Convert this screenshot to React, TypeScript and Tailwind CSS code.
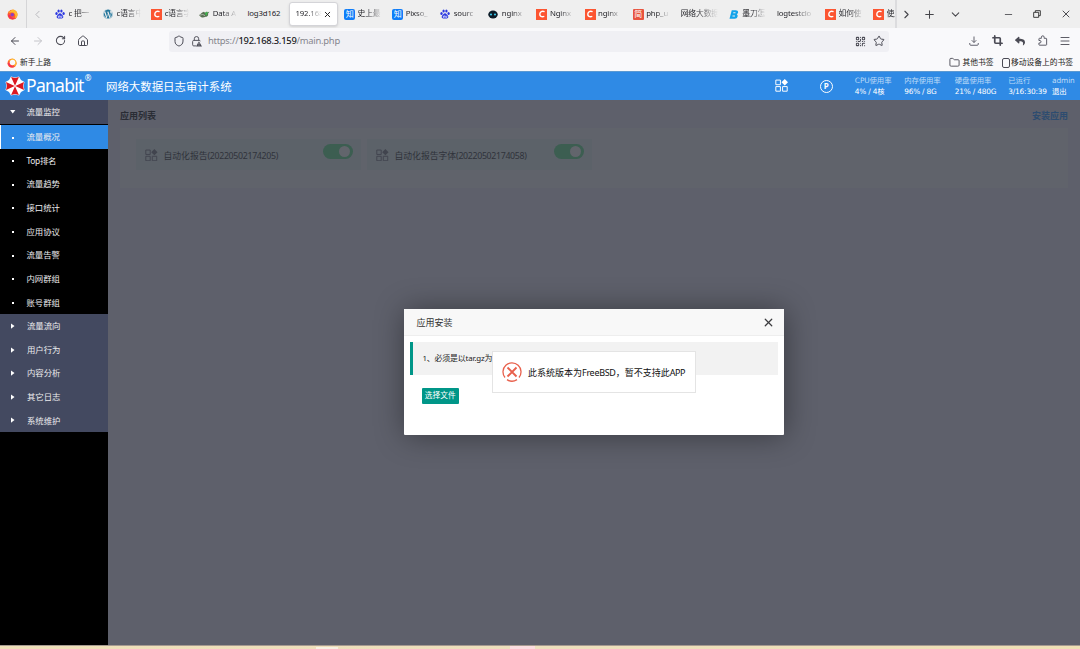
import type { ReactNode } from "react";
import clsx from "clsx";
import {
  ArrowLeft,
  ArrowRight,
  ChevronDown,
  ChevronLeft,
  ChevronRight,
  Crop,
  Folder,
  House,
  Menu,
  Minus,
  Plus,
  QrCode,
  RotateCw,
  Shield,
  Star,
  X,
} from "lucide-react";
import { FaReply, FaWordpress } from "react-icons/fa";

type IconKind =
  | "baidu"
  | "wordpress"
  | "csdn"
  | "data"
  | "zhihu"
  | "robot"
  | "jian"
  | "modao";

interface Tab {
  title: string;
  icon?: IconKind;
  active?: boolean;
}

const tabs: Tab[] = [
  { title: "c 把一", icon: "baidu" },
  { title: "c语言中", icon: "wordpress" },
  { title: "c语言字", icon: "csdn" },
  { title: "Data A", icon: "data" },
  { title: "log3d162" },
  { title: "192.168", active: true },
  { title: "史上最", icon: "zhihu" },
  { title: "Pixso_", icon: "zhihu" },
  { title: "sourc", icon: "baidu" },
  { title: "nginx", icon: "robot" },
  { title: "Nginx", icon: "csdn" },
  { title: "nginx", icon: "csdn" },
  { title: "php_u", icon: "jian" },
  { title: "网络大数据" },
  { title: "墨刀怎", icon: "modao" },
  { title: "logtestclo" },
  { title: "如何使", icon: "csdn" },
  { title: "使用", icon: "csdn" },
];

const menuItems = [
  "流量概况",
  "Top排名",
  "流量趋势",
  "接口统计",
  "应用协议",
  "流量告警",
  "内网群组",
  "账号群组",
];

const menuGroups = ["流量流向", "用户行为", "内容分析", "其它日志", "系统维护"];

const apps = [
  { name: "自动化报告", version: "(20220502174205)" },
  { name: "自动化报告字体", version: "(20220502174058)" },
];

const stats = [
  { label: "CPU使用率", value: "4% / 4核", width: "w-[49.3px]" },
  { label: "内存使用率", value: "96% / 8G", width: "w-[50.7px]" },
  { label: "硬盘使用率", value: "21% / 480G", width: "w-[53.5px]" },
  { label: "已运行", value: "3/16:30:39", width: "w-[43.7px]" },
  { label: "admin", value: "退出", width: "w-[28px]" },
];

function Square({ className, children }: { className: string; children: ReactNode }) {
  return (
    <span
      className={clsx(
        "flex size-[11px] shrink-0 items-center justify-center leading-none text-white",
        className
      )}
    >
      {children}
    </span>
  );
}

function TabIcon({ kind }: { kind: IconKind }) {
  switch (kind) {
    case "baidu":
      return (
        <svg viewBox="0 0 20 20" className="mr-[1px] size-[10px] shrink-0" fill="#2a36e0">
          <ellipse cx="3" cy="9" rx="2.3" ry="3" />
          <ellipse cx="7.2" cy="4" rx="2.3" ry="3.2" />
          <ellipse cx="12.8" cy="4" rx="2.3" ry="3.2" />
          <ellipse cx="17.2" cy="9" rx="2.3" ry="3" />
          <path d="M10 8.5c2.5 0 3.5 2.6 5.2 4.2 2.4 2.2 2 6.3-1.6 6.5-1.5.1-2.300-.4-3.600-.4s-2.200.5-3.700.4c-3.500-.2-3.900-4.300-1.500-6.500C6.500 11.100 7.500 8.500 10 8.500z" />
          <path d="M8.500 12.500v4.300H6.500v-2h2M11.300 13.500v3.300h2.300v-3.300" fill="none" stroke="#fff" strokeWidth="1.300" />
        </svg>
      );
    case "wordpress":
      return <FaWordpress className="mr-[1px] size-[10px] shrink-0 text-[#21759b]" />;
    case "csdn":
      return (
        <Square className="bg-[#fc5531]">
          <svg viewBox="0 0 10 10" className="size-[10px]" fill="none" stroke="#fff" strokeWidth="1.4">
            <path d="M7.600 2.700C5 1.600 3 2.600 2.800 5s1.900 3.300 4.500 2.300" />
          </svg>
        </Square>
      );
    case "data":
      return (
        <svg viewBox="0 0 20 12" className="h-[7px] w-[11px] shrink-0">
          <path d="M0 7c3-1 4-5 9-6l2 2 4-3-1 3 5-2-3 4c2 1 0 5-4 5-3 2-8 2-9 0z" fill="#587052" />
          <path d="M11 3l6-2-3 4 2 3-4-1z" fill="#3bbd4c" />
          <path d="M2 7l5-1 4 2" fill="none" stroke="#d7ded6" strokeWidth="1.200" />
        </svg>
      );
    case "zhihu":
      return <Square className="rounded-[2px] bg-[#0f7df8] text-[8px]">知</Square>;
    case "robot":
      return (
        <svg viewBox="0 0 20 18" className="mr-[1px] h-[9px] w-[10px] shrink-0">
          <ellipse cx="10" cy="9" rx="9.500" ry="8" fill="#0b1a26" />
          <circle cx="6" cy="9" r="2.200" fill="#39c3e6" />
          <circle cx="14" cy="9" r="2.200" fill="#39c3e6" />
        </svg>
      );
    case "jian":
      return <Square className="rounded-[1px] bg-[#e8533e] text-[8px]">简</Square>;
    case "modao":
      return (
        <svg viewBox="0 0 20 18" className="mr-[1px] h-[9px] w-[10px] shrink-0">
          <path
            d="M5.500 0.500h8c6 0 6 6.500 2 8 3.500 1.500 2 9-4 9H1z"
            fill="#12a3ea"
          />
          <path d="M8.500 5.500h4.500M7 12h5" stroke="#efefef" strokeWidth="2" />
        </svg>
      );
  }
}

function BrowserTab({ tab }: { tab: Tab }) {
  return (
    <div
      className={clsx(
        "flex w-[48.100px] shrink-0 items-center text-[7.800px] tracking-[-0.150px] text-[#25252a]",
        tab.active
          ? "my-[2px] ml-[0.500px] w-[47.600px] rounded-[3px] border border-[#d4d4d8] bg-white pl-[5px] pr-[5px] shadow-sm"
          : "pl-[6.500px] pr-[4px]"
      )}
    >
      {tab.icon && <TabIcon kind={tab.icon} />}
      <span
        className={clsx(
          "min-w-0 flex-1 whitespace-nowrap",
          tab.icon && "ml-[2.500px]",
          tab.title !== "log3d162" &&
            "[mask-image:linear-gradient(to_right,black_40%,transparent)]"
        )}
      >
        {tab.title}
      </span>
      {tab.active && <X className="ml-[1px] size-[9px] shrink-0 text-[#222]" strokeWidth={2.600} />}
    </div>
  );
}

function FirefoxLogo({ ring }: { ring?: boolean }) {
  return (
    <svg viewBox="0 0 20 20" className={clsx("shrink-0", ring ? "size-[10px]" : "size-[11px]")}>
      <circle cx="10" cy="10.500" r="9" fill="#ff5b2e" />
      <path d="M2 6C5 5 8 1 12 1c5 2 8 6 7 11-1 3-3 5-6 6 3-4 3-8-1-11C9 5 5 8 2 6z" fill="#ffb92e" />
      <path d="M1.500 10c1 8 10 11 15 6-5 2-9 0-11-5z" fill="#f02e5d" />
      {ring ? (
        <circle cx="11" cy="9" r="5.500" fill="#f9f9fb" />
      ) : (
        <circle cx="9.500" cy="10.500" r="3.200" fill="#8a3fc4" />
      )}
    </svg>
  );
}

function LockWarning() {
  return (
    <svg viewBox="0 0 20 20" className="size-[11px]" fill="none" stroke="#4b4b55" strokeWidth="1.700">
      <path d="M6 8V5a4 4 0 0 1 8 0v3" />
      <path d="M9 18H5a2 2 0 0 1-2-2v-6a2 2 0 0 1 2-2h10a2 2 0 0 1 2 1.500" />
      <path d="M14.500 9.500 20 19H9z" fill="#4b4b55" stroke="none" />
      <path d="M14.500 12.500v3M14.500 16.500v1" stroke="#fff" strokeWidth="1" />
    </svg>
  );
}

function DownloadIcon() {
  return (
    <svg viewBox="0 0 20 20" className="size-[10px]" fill="none" stroke="#5b5b66" strokeWidth="1.900">
      <path d="M10 1v12M5.500 8.500 10 13l4.500-4.500M1.500 14v2.500a2 2 0 0 0 2 2h13a2 2 0 0 0 2-2V14" />
    </svg>
  );
}

function ExtensionIcon() {
  return (
    <svg viewBox="0 0 20 20" className="size-[11px]" fill="none" stroke="#5b5b66" strokeWidth="1.800" strokeLinejoin="round">
      <path d="M8 6V4a2.400 2.400 0 0 1 5 0v2h3.500a1 1 0 0 1 1 1v10.500a1 1 0 0 1-1 1h-12a1 1 0 0 1-1-1V14.500h2a2.300 2.300 0 0 0 0-4.500h-2V7a1 1 0 0 1 1-1z" />
    </svg>
  );
}

function AppGridIcon({ className }: { className?: string }) {
  return (
    <svg viewBox="0 0 24 24" className={className} fill="none" stroke="currentColor" strokeWidth="1.800">
      <path d="M1.500 2h8.500v8.500H1.500zM1.500 14h8.500v8.500H1.500zM14 14h8.500v8.500H14z" />
      <path d="m18 0 6 6-6 6-6-6z" fill="currentColor" stroke="none" />
    </svg>
  );
}

function PanabitMark() {
  return (
    <svg viewBox="-10 -10 20 20" className="size-[20px] shrink-0">
      <path d="M-4-9.500 0-8.500 4-9.500 6-6 9.500-4 8.500 0 9.500 4 6 6 4 9.500 0 8.500-4 9.500-6 6-9.500 4-8.500 0-9.500-4-6-6z" fill="#fff" />
      {[0, 90, 180, 270].map((deg) => (
        <path
          key={deg}
          d="M0-0.300-3.900-9 0-8 3.900-9z"
          fill="#dc1820"
          transform={`rotate(${deg})`}
        />
      ))}
    </svg>
  );
}

function BrowserChrome() {
  return (
    <div className="text-[#4b4b55]">
      <div className="flex h-[28px] bg-[#efefef]">
        <div className="flex w-[27px] items-center border-r border-[#d5d5d7] pl-[7px]">
          <FirefoxLogo />
        </div>
        <div className="flex w-[21.500px] items-center justify-center text-[#b5b5b9]">
          <ChevronLeft className="size-[13px]" strokeWidth={1.700} />
        </div>
        <div className="flex w-[848.500px] overflow-hidden border-r-2 border-[#dcdcde]">
          {tabs.map((tab, i) => (
            <BrowserTab key={i} tab={tab} />
          ))}
        </div>
        <div className="flex flex-1 items-center pl-[3px] text-[#45454a]">
          <ChevronRight className="size-[13px]" strokeWidth={2} />
          <Plus className="ml-[10px] size-[13px]" strokeWidth={1.900} />
          <ChevronDown className="ml-[13px] size-[13px]" strokeWidth={1.900} />
          <Minus className="ml-[41px] size-[11px]" strokeWidth={1.800} />
          <svg viewBox="0 0 12 12" className="ml-[19px] size-[8px]" fill="none" stroke="#333" strokeWidth="1.400">
            <path d="M1 3.500h7.500V11H1zM3.500 3.500V1H11v7.500H8.500" />
          </svg>
          <X className="ml-[19px] size-[12px]" strokeWidth={1.900} />
        </div>
      </div>

      <div className="flex h-[25px] items-center bg-[#f9f9fb] pl-[9px]">
        <ArrowLeft className="size-[12px]" strokeWidth={2} />
        <ArrowRight className="ml-[11px] size-[12px] text-[#c4c4c9]" strokeWidth={2} />
        <RotateCw className="ml-[11px] size-[11px]" strokeWidth={2.200} />
        <House className="ml-[11px] size-[12px]" strokeWidth={2} />
        <div className="ml-[80px] mt-[1px] flex h-[21px] w-[720px] items-center rounded-[3px] bg-[#f0f0f4] pl-[4px]">
          <Shield className="size-[12px]" strokeWidth={2} />
          <span className="ml-[6px]">
            <LockWarning />
          </span>
          <span className="ml-[6px] w-[640px] text-[9.400px] tracking-[-0.240px] text-[#85858c]">
            https://<span className="font-medium text-[#202025]">192.168.3.159</span>/main.php
          </span>
          <QrCode className="ml-[7px] size-[11px] shrink-0" strokeWidth={2.200} />
          <Star className="ml-[7px] size-[12px] shrink-0" strokeWidth={2} />
        </div>
        <div className="ml-[80px] flex items-center">
          <DownloadIcon />
          <Crop className="ml-[12.500px] size-[11px]" strokeWidth={3.700} />
          <FaReply className="ml-[12px] size-[10px]" />
          <span className="ml-[12px]">
            <ExtensionIcon />
          </span>
          <Menu className="ml-[11px] size-[12px]" strokeWidth={1.800} />
        </div>
      </div>

      <div className="flex h-[18px] items-center justify-between bg-[#f9f9fb] pl-[7px] pr-[7px] pt-[1px] text-[7.750px] text-[#1c1c21]">
        <div className="flex items-center gap-[3px]">
          <FirefoxLogo ring />
          新手上路
        </div>
        <div className="flex items-center">
          <Folder className="mr-[2px] size-[11px] text-[#4b4b55]" strokeWidth={2} />
          其他书签
          <span className="ml-[9px] mr-px h-[10px] w-[7.500px] rounded-[2px] border-[1.500px] border-[#4b4b55]" />
          移动设备上的书签
        </div>
      </div>
    </div>
  );
}

function SiteHeader() {
  return (
    <header className="flex h-[29px] items-center border-t border-[#5b99d2] bg-[#2f8ae5] text-white">
      <div className="flex w-[106px] items-center pl-[5px]">
        <PanabitMark />
        <span className="ml-[1px] text-[17.500px] leading-none tracking-[-0.700px] [font-family:'Noto_Sans']">
          Panabit
        </span>
        <sup className="-top-[8px] ml-[1px] text-[8px] leading-none">®</sup>
      </div>
      <h1 className="w-[669px] pt-[1px] text-[11.430px] leading-none">网络大数据日志审计系统</h1>
      <AppGridIcon className="mb-[2px] size-[13px]" />
      <span className="ml-[32px] flex size-[13px] items-center justify-center rounded-full border-[1.300px] border-white text-[8px] font-bold leading-none">
        P
      </span>
      <div className="ml-[22px] mt-[1px] flex text-[7.400px] leading-[10.500px] [font-family:'DejaVu_Sans','Noto_Sans_CJK_SC',sans-serif]">
        {stats.map((s) => (
          <div key={s.label} className={clsx("shrink-0 whitespace-nowrap", s.width)}>
            <div className="tracking-[-0.100px] text-[#bddbf8]">{s.label}</div>
            <div className="tracking-[-0.200px]">{s.value}</div>
          </div>
        ))}
      </div>
    </header>
  );
}

function Sidebar() {
  return (
    <nav className="flex w-[107.500px] flex-col bg-black text-[8.400px] text-[#ececee]">
      <div className="mb-[1.200px] flex h-[24px] items-center bg-[#434960]">
        <span className="ml-[10px] w-[16.500px]">
          <svg viewBox="0 0 6 4" className="h-[3.500px] w-[5.500px]" fill="#fff">
            <path d="M0 0h6L3 4z" />
          </svg>
        </span>
        流量监控
      </div>
      {menuItems.map((item, i) => (
        <div
          key={item}
          className={clsx(
            "flex h-[23.650px] items-center border-l-[1.500px] pt-[1px]",
            i === 0 ? "border-white bg-[#2f8ae5]" : "border-black"
          )}
        >
          <span className="ml-[10.500px] mr-[13px] size-[2px] bg-white" />
          <span className={clsx(item === "Top排名" && "tracking-[-0.300px]")}>{item}</span>
        </div>
      ))}
      {menuGroups.map((group) => (
        <div key={group} className="flex h-[23.600px] items-center bg-[#434960] pt-[1px]">
          <span className="ml-[11px] w-[16px]">
            <svg viewBox="0 0 4 6" className="-mt-px h-[6px] w-[3.500px]" fill="#fff">
              <path d="M0 0v6l4-3z" />
            </svg>
          </span>
          {group}
        </div>
      ))}
    </nav>
  );
}

function AppCard({ name, version }: { name: string; version: string }) {
  return (
    <div className="flex h-[31px] w-[225px] bg-[#5c6269] pl-[9px] pt-[5px]">
      <AppGridIcon className="mt-[4.500px] size-[12.500px] text-[#41444e]" />
      <span className="ml-[6px] mt-[6px] w-[159px] whitespace-nowrap text-[8.800px] text-[#30333b]">
        {name}
        <span className="tracking-[-0.330px]">{version}</span>
      </span>
      <span className="flex h-[15px] w-[30px] items-center justify-end rounded-full bg-[#3c5e51] pr-[3px]">
        <span className="size-[11px] rounded-full bg-[#62656c]" />
      </span>
    </div>
  );
}

function InstallDialog() {
  return (
    <div className="absolute left-[404px] top-[309px] h-[126px] w-[380px] rounded-[1px] bg-white shadow-[1px_1px_30px_rgba(0,0,0,0.4)]">
      <div className="flex h-[27px] items-center justify-between border-b border-[#eee] bg-[#f8f8f8] pl-[12.500px] pr-[9px] pt-[1px] text-[9px] text-[#333]">
        应用安装
        <X className="size-[13px] text-[#3c3c3f]" strokeWidth={2.300} />
      </div>
      <div className="ml-[6px] mr-[6px] mt-[6px] flex h-[33px] items-center border-l-[3.500px] border-[#009688] bg-[#f2f2f2] pl-[9.500px] text-[7.900px] tracking-[-0.150px] text-[#222]">
        1、必须是以tar.gz为后缀
      </div>
      <button className="ml-[17.500px] mt-[12.500px] flex h-[16.500px] w-[37.500px] items-center justify-center rounded-[1px] bg-[#009688] pt-[1px] text-[7.700px] text-white">
        选择文件
      </button>
    </div>
  );
}

function ErrorMessage() {
  return (
    <div className="absolute left-[492px] top-[351px] flex h-[42px] w-[204px] items-center whitespace-nowrap border border-[#e4e4e4] bg-white pl-[9px] text-[9px] text-[#111]">
      <svg viewBox="0 0 20 20" className="size-[20px] shrink-0" fill="none" stroke="#e8604c">
        <path d="M3 15.500A9 9 0 1 1 17 15.500M5 17.600a9 9 0 0 0 10 0" strokeWidth="1.300" />
        <path d="m5.500 5.500 9 9m0-9-9 9" strokeWidth="1.900" />
      </svg>
      <span className="ml-[6px] pt-[1px]">
        此系统版本为<span className="tracking-[-0.300px]">FreeBSD</span>，暂不支持此
        <span className="tracking-[-0.450px]">APP</span>
      </span>
    </div>
  );
}

export default function App() {
  return (
    <div className="relative flex h-[649px] w-[1080px] flex-col overflow-hidden leading-normal [font-family:'Noto_Sans','Noto_Sans_CJK_SC',sans-serif]">
      <BrowserChrome />
      <SiteHeader />
      <div className="flex h-[544.500px]">
        <Sidebar />
        <main className="flex-1 bg-[#5e606b] pl-[12.500px] pr-[12px]">
          <div className="flex h-[28px] items-center justify-between pt-[3px] text-[9px]">
            <span className="font-semibold text-[#292c34]">应用列表</span>
            <span className="font-semibold text-[#2d4c70]">安装应用</span>
          </div>
          <div className="flex h-[60px] gap-[6px] bg-[#60636b] pl-[16px] pt-[11px]">
            {apps.map((app) => (
              <AppCard key={app.name} name={app.name} version={app.version} />
            ))}
          </div>
        </main>
      </div>
      <footer className="flex flex-1 items-end border-t border-[#a69a91] bg-linear-to-r from-[#efdfb9] via-[#eee0bd] to-[#efe0b5]">
        <span className="ml-[316px] h-[2px] w-[22px] bg-[#f8f1e2]" />
        <span className="ml-[172px] h-[3px] w-[25px] bg-[#fbdde0]" />
      </footer>
      <InstallDialog />
      <ErrorMessage />
    </div>
  );
}
